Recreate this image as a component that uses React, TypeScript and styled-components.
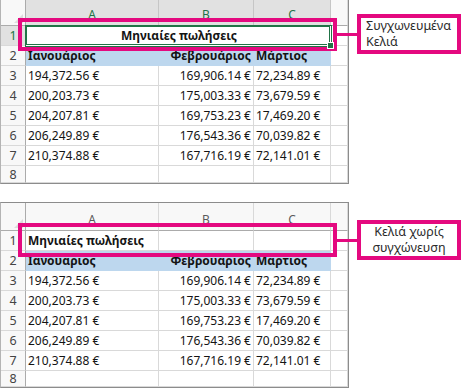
import { Fragment } from "react";
import styled, { createGlobalStyle } from "styled-components";

const GlobalStyle = createGlobalStyle`
  body {
    margin: 0;
    background: #ffffff;
    font-family: "Noto Sans", "DejaVu Sans", sans-serif;
  }
`;

const PINK = "#e4097f";
const GREEN = "#217346";
const BLUE = "#bdd7ee";

const Page = styled.div`
  width: 470px;
  height: 389px;
  display: flex;
  flex-direction: column;
  gap: 18px;
  overflow: hidden;
`;

const Section = styled.div`
  position: relative;
`;

const Sheet = styled.div<{ $top?: boolean }>`
  width: 349px;
  box-sizing: border-box;
  display: grid;
  grid-template-columns: 25px 133px 95px 77px 17px;
  border-left: 1px solid #b4b4b4;
  border-right: 1px solid #8c8c8c;
  border-bottom: 1px solid #8c8c8c;
  border-top: ${(p) => (p.$top ? "none" : "1px solid #8c8c8c")};
`;

const Cell = styled.div<{ $h: number; $fill?: string; $align?: "left" | "right" | "center"; $bold?: boolean }>`
  height: ${(p) => p.$h}px;
  box-sizing: border-box;
  border-right: 1px solid ${(p) => p.$fill ?? "#d9d9d9"};
  border-bottom: 1px solid ${(p) => p.$fill ?? "#d9d9d9"};
  background: ${(p) => p.$fill ?? "#ffffff"};
  display: flex;
  align-items: center;
  justify-content: ${(p) => (p.$align === "right" ? "flex-end" : p.$align === "center" ? "center" : "flex-start")};
  padding: 0 2px;
  font-size: 12px;
  font-weight: ${(p) => (p.$bold ? 700 : 400)};
  color: #141414;
  white-space: nowrap;
  overflow: visible;
`;

const HeadCell = styled.div<{ $h: number; $sel?: boolean }>`
  position: relative;
  height: ${(p) => p.$h}px;
  box-sizing: border-box;
  border-right: 1px solid ${(p) => (p.$sel ? "#c6c6c6" : "#d9d9d9")};
  border-bottom: 1px solid #ababab;
  background: ${(p) => (p.$sel ? "#e1e1e1" : "#f8f8f8")};
  display: flex;
  align-items: flex-end;
  justify-content: center;
  padding-bottom: 3px;
  line-height: 14px;
  font-size: 12px;
  color: ${(p) => (p.$sel ? GREEN : "#5a5a5a")};
`;

const Corner = styled(HeadCell)`
  border-right: 1px solid #ababab;
  &::after {
    content: "";
    position: absolute;
    right: 2px;
    bottom: 2px;
    border-left: 9px solid transparent;
    border-bottom: 9px solid #dcdcdc;
  }
`;

const RowNum = styled.div<{ $h: number; $sel?: boolean }>`
  height: ${(p) => p.$h}px;
  box-sizing: border-box;
  border-right: 1px solid #ababab;
  border-bottom: 1px solid #d9d9d9;
  background: ${(p) => (p.$sel ? "#e1e1e1" : "#f8f8f8")};
  display: flex;
  align-items: center;
  justify-content: center;
  font-size: 12.5px;
  color: ${(p) => (p.$sel ? GREEN : "#444444")};
`;

const Merged = styled(Cell)`
  grid-column: span 3;
  position: relative;
  z-index: 1;
  border-color: transparent;
  box-shadow: 0 0 0 1px ${GREEN}, inset 0 0 0 1px ${GREEN};
  padding-left: 4px;
`;

const Handle = styled.span`
  position: absolute;
  right: -4px;
  bottom: -4px;
  width: 5px;
  height: 5px;
  background: ${GREEN};
  border: 1px solid #ffffff;
`;

const Annotation = styled.div<{ $top: number }>`
  position: absolute;
  left: 18px;
  top: ${(p) => p.$top}px;
  display: flex;
  align-items: center;
`;

const Frame = styled.div<{ $h: number }>`
  width: 319px;
  height: ${(p) => p.$h}px;
  box-sizing: border-box;
  border: 4px solid ${PINK};
`;

const Link = styled.div`
  width: 20px;
  height: 3px;
  background: ${PINK};
`;

const Callout = styled.div<{ $center?: boolean }>`
  width: 104px;
  height: 40px;
  box-sizing: border-box;
  border: 4px solid ${PINK};
  display: flex;
  flex-direction: column;
  justify-content: center;
  align-items: ${(p) => (p.$center ? "center" : "flex-start")};
  padding-left: ${(p) => (p.$center ? 0 : 5)}px;
  font-size: 12.5px;
  line-height: 16px;
  color: #2b2b2b;
  background: #ffffff;
`;

const rows: [string, string, string][] = [
  ["194,372.56 €", "169,906.14 €", "72,234.89 €"],
  ["200,203.73 €", "175,003.33 €", "73,679.59 €"],
  ["204,207.81 €", "169,753.23 €", "17,469.20 €"],
  ["206,249.89 €", "176,543.36 €", "70,039.82 €"],
  ["210,374.88 €", "167,716.19 €", "72,141.01 €"],
];

type SheetProps = {
  merged: boolean;
  headH: number;
  lastH: number;
  months: [string, string, string];
};

const SheetView = ({ merged, headH, lastH, months }: SheetProps) => (
  <Sheet $top={merged}>
    <Corner $h={headH} />
    {["A", "B", "C"].map((l) => (
      <HeadCell key={l} $h={headH} $sel={merged}>
        {l}
      </HeadCell>
    ))}
    <HeadCell $h={headH} />

    <RowNum $h={20} $sel={merged}>
      1
    </RowNum>
    {merged ? (
      <Merged $h={20} $align="center" $bold>
        Μηνιαίες πωλήσεις
        <Handle />
      </Merged>
    ) : (
      <>
        <Cell $h={20} $bold>
          Μηνιαίες πωλήσεις
        </Cell>
        <Cell $h={20} />
        <Cell $h={20} />
      </>
    )}
    <Cell $h={20} />

    <RowNum $h={20}>2</RowNum>
    <Cell $h={20} $fill={BLUE} $bold>
      {months[0]}
    </Cell>
    <Cell $h={20} $fill={BLUE} $align="right" $bold>
      {months[1]}
    </Cell>
    <Cell $h={20} $fill={BLUE} $bold>
      {months[2]}
    </Cell>
    <Cell $h={20} />

    {rows.map((r, i) => (
      <Fragment key={i}>
        <RowNum $h={20}>{i + 3}</RowNum>
        <Cell $h={20}>{r[0]}</Cell>
        <Cell $h={20} $align="right">
          {r[1]}
        </Cell>
        <Cell $h={20}>{r[2]}</Cell>
        <Cell $h={20} />
      </Fragment>
    ))}

    <RowNum $h={lastH}>8</RowNum>
    <Cell $h={lastH} />
    <Cell $h={lastH} />
    <Cell $h={lastH} />
    <Cell $h={lastH} />
  </Sheet>
);

export default function App() {
  return (
    <>
      <GlobalStyle />
      <Page>
        <Section>
          <SheetView merged headH={26} lastH={17} months={["Ιανουάριος", "Φεβρουάριος", "Μάρτιος"]} />
          <Annotation $top={14}>
            <Frame $h={33} />
            <Link />
            <Callout>
              <span>Συγχωνευμένα</span>
              <span>Κελιά</span>
            </Callout>
          </Annotation>
        </Section>
        <Section>
          <SheetView merged={false} headH={28} lastH={16} months={["Ιανουαριος", "Φεβρουαριος", "Μαρτιος"]} />
          <Annotation $top={18}>
            <Frame $h={34} />
            <Link />
            <Callout $center>
              <span>Κελιά χωρίς</span>
              <span>συγχώνευση</span>
            </Callout>
          </Annotation>
        </Section>
      </Page>
    </>
  );
}
